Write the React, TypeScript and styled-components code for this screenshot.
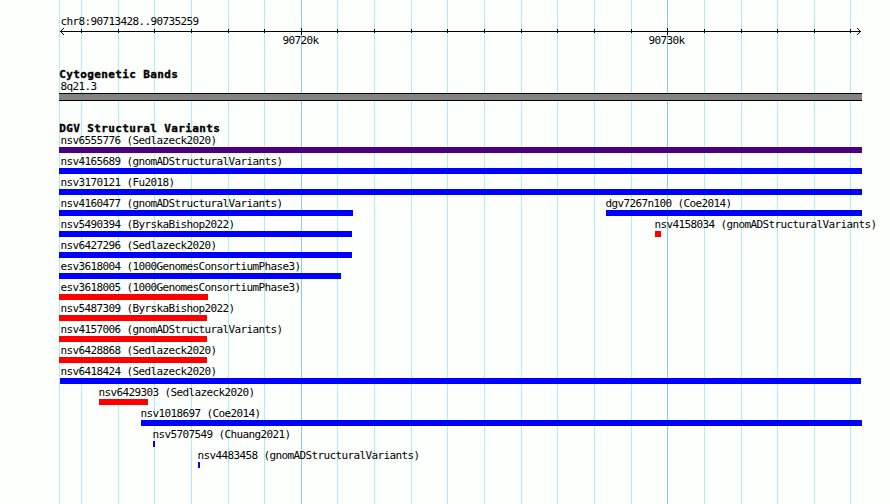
import styled, { createGlobalStyle } from 'styled-components';

type Feature = { name: string; start: number; end: number; color: string };

const LEFT = 59;
const RIGHT = 862;

const COLOR = {
  blue: '#0000ff',
  red: '#ff0000',
  purple: '#4b0082',
};

const GRID = [
  59, 81, 118, 154, 191, 228, 264, 301, 337, 374, 411, 447, 484, 521, 557, 594, 631, 667, 704, 741,
  777, 814, 850,
];
const MAJOR = [301, 667];

const ROWS: Feature[][] = [
  [{ name: 'nsv6555776 (Sedlazeck2020)', start: 59, end: 862, color: COLOR.purple }],
  [{ name: 'nsv4165689 (gnomADStructuralVariants)', start: 59, end: 862, color: COLOR.blue }],
  [{ name: 'nsv3170121 (Fu2018)', start: 59, end: 862, color: COLOR.blue }],
  [
    { name: 'nsv4160477 (gnomADStructuralVariants)', start: 59, end: 353, color: COLOR.blue },
    { name: 'dgv7267n100 (Coe2014)', start: 606, end: 862, color: COLOR.blue },
  ],
  [
    { name: 'nsv5490394 (ByrskaBishop2022)', start: 59, end: 352, color: COLOR.blue },
    { name: 'nsv4158034 (gnomADStructuralVariants)', start: 655, end: 661, color: COLOR.red },
  ],
  [{ name: 'nsv6427296 (Sedlazeck2020)', start: 59, end: 352, color: COLOR.blue }],
  [{ name: 'esv3618004 (1000GenomesConsortiumPhase3)', start: 59, end: 341, color: COLOR.blue }],
  [{ name: 'esv3618005 (1000GenomesConsortiumPhase3)', start: 59, end: 208, color: COLOR.red }],
  [{ name: 'nsv5487309 (ByrskaBishop2022)', start: 59, end: 207, color: COLOR.red }],
  [{ name: 'nsv4157006 (gnomADStructuralVariants)', start: 59, end: 207, color: COLOR.red }],
  [{ name: 'nsv6428868 (Sedlazeck2020)', start: 59, end: 207, color: COLOR.red }],
  [{ name: 'nsv6418424 (Sedlazeck2020)', start: 60, end: 861, color: COLOR.blue }],
  [{ name: 'nsv6429303 (Sedlazeck2020)', start: 99, end: 148, color: COLOR.red }],
  [{ name: 'nsv1018697 (Coe2014)', start: 141, end: 862, color: COLOR.blue }],
  [{ name: 'nsv5707549 (Chuang2021)', start: 153, end: 155, color: COLOR.blue }],
  [{ name: 'nsv4483458 (gnomADStructuralVariants)', start: 198, end: 200, color: COLOR.blue }],
];

const Grid = () => (
  <GridLayer width="890" height="504" shapeRendering="crispEdges" aria-hidden>
    {GRID.map((x) => (
      <rect
        key={x}
        x={x}
        y="0"
        width="1"
        height="504"
        fill={MAJOR.includes(x) ? '#87ceeb' : '#afeeee'}
      />
    ))}
  </GridLayer>
);

const Axis = () => (
  <AxisLine width="803" height="7" viewBox="59 28 803 7" shapeRendering="crispEdges" aria-hidden>
    <rect x="60" y="31" width="801" height="1" />
    {GRID.slice(1).map((x) =>
      MAJOR.includes(x) ? (
        <rect key={x} x={x} y="28" width="1" height="7" />
      ) : (
        <rect key={x} x={x} y="29" width="1" height="4" />
      ),
    )}
    {[1, 2, 3].map((d) => (
      <g key={d}>
        <rect x={60 + d} y={31 - d} width="1" height="1" />
        <rect x={60 + d} y={31 + d} width="1" height="1" />
        <rect x={860 - d} y={31 - d} width="1" height="1" />
        <rect x={860 - d} y={31 + d} width="1" height="1" />
      </g>
    ))}
  </AxisLine>
);

const FeatureRow = ({ features }: { features: Feature[] }) => (
  <Row>
    {features.map(({ name, start, end, color }, i) => (
      <Glyph key={name} $gap={start - (i ? features[i - 1].end : LEFT)} $width={end - start}>
        <Label $indent={start === LEFT ? 1.4 : start === 60 ? 0.4 : -0.6}>{name}</Label>
        <Bar $color={color} />
      </Glyph>
    ))}
  </Row>
);

const App = () => {
  return (
    <Page>
      <GlobalStyle />
      <Grid />
      <Tracks>
        <Ruler>
          <Label $indent={1.4}>chr8:90713428..90735259</Label>
          <Axis />
          <Ticks>
            <Label $indent={223.4}>90720k</Label>
            <Label $indent={330}>90730k</Label>
          </Ticks>
        </Ruler>
        <Cytoband>
          <Title>Cytogenetic Bands</Title>
          <Label $indent={1.4}>8q21.3</Label>
          <Band />
        </Cytoband>
        <section>
          <Title>DGV Structural Variants</Title>
          {ROWS.map((features) => (
            <FeatureRow key={features[0].name} features={features} />
          ))}
        </section>
      </Tracks>
    </Page>
  );
};

const GlobalStyle = createGlobalStyle`
  body {
    margin: 0;
    background: #fdfffc;
  }
`;

const Page = styled.main`
  position: relative;
  width: 890px;
  height: 504px;
  overflow: hidden;
  color: #000;
  background: #fdfffc;
  font-family: 'DejaVu Sans Mono', monospace;
`;

const GridLayer = styled.svg`
  position: absolute;
  top: 0;
  left: 0;
`;

const Tracks = styled.div`
  position: relative;
  width: ${RIGHT - LEFT}px;
  padding: 15px 0 0 ${LEFT}px;
`;

const Ruler = styled.header`
  height: 53px;
`;

const AxisLine = styled.svg`
  display: block;
`;

const Ticks = styled.div`
  display: flex;
  margin-top: -1px;
`;

const Cytoband = styled.section`
  height: 54px;
`;

const Title = styled.h2`
  height: 12px;
  margin: 0;
  padding-left: 0.3px;
  font-size: 11px;
  font-weight: 700;
  line-height: 13px;
  letter-spacing: 0.378px;
  white-space: pre;
  -webkit-text-stroke: 0.35px #000;
`;

const Label = styled.div<{ $indent: number }>`
  flex: none;
  height: 13px;
  margin-left: ${({ $indent }) => $indent}px;
  font-size: 11px;
  line-height: 13px;
  letter-spacing: -0.622px;
  white-space: pre;
`;

const Band = styled.div`
  box-sizing: border-box;
  height: 8px;
  border: solid #000;
  border-width: 1px 0;
  background: #848284;
`;

const Row = styled.div`
  display: flex;
  height: 21px;
`;

const Glyph = styled.div<{ $gap: number; $width: number }>`
  flex: none;
  width: ${({ $width }) => $width}px;
  margin-left: ${({ $gap }) => $gap}px;
`;

const Bar = styled.div<{ $color: string }>`
  height: 6px;
  background: ${({ $color }) => $color};
`;

export default App;
